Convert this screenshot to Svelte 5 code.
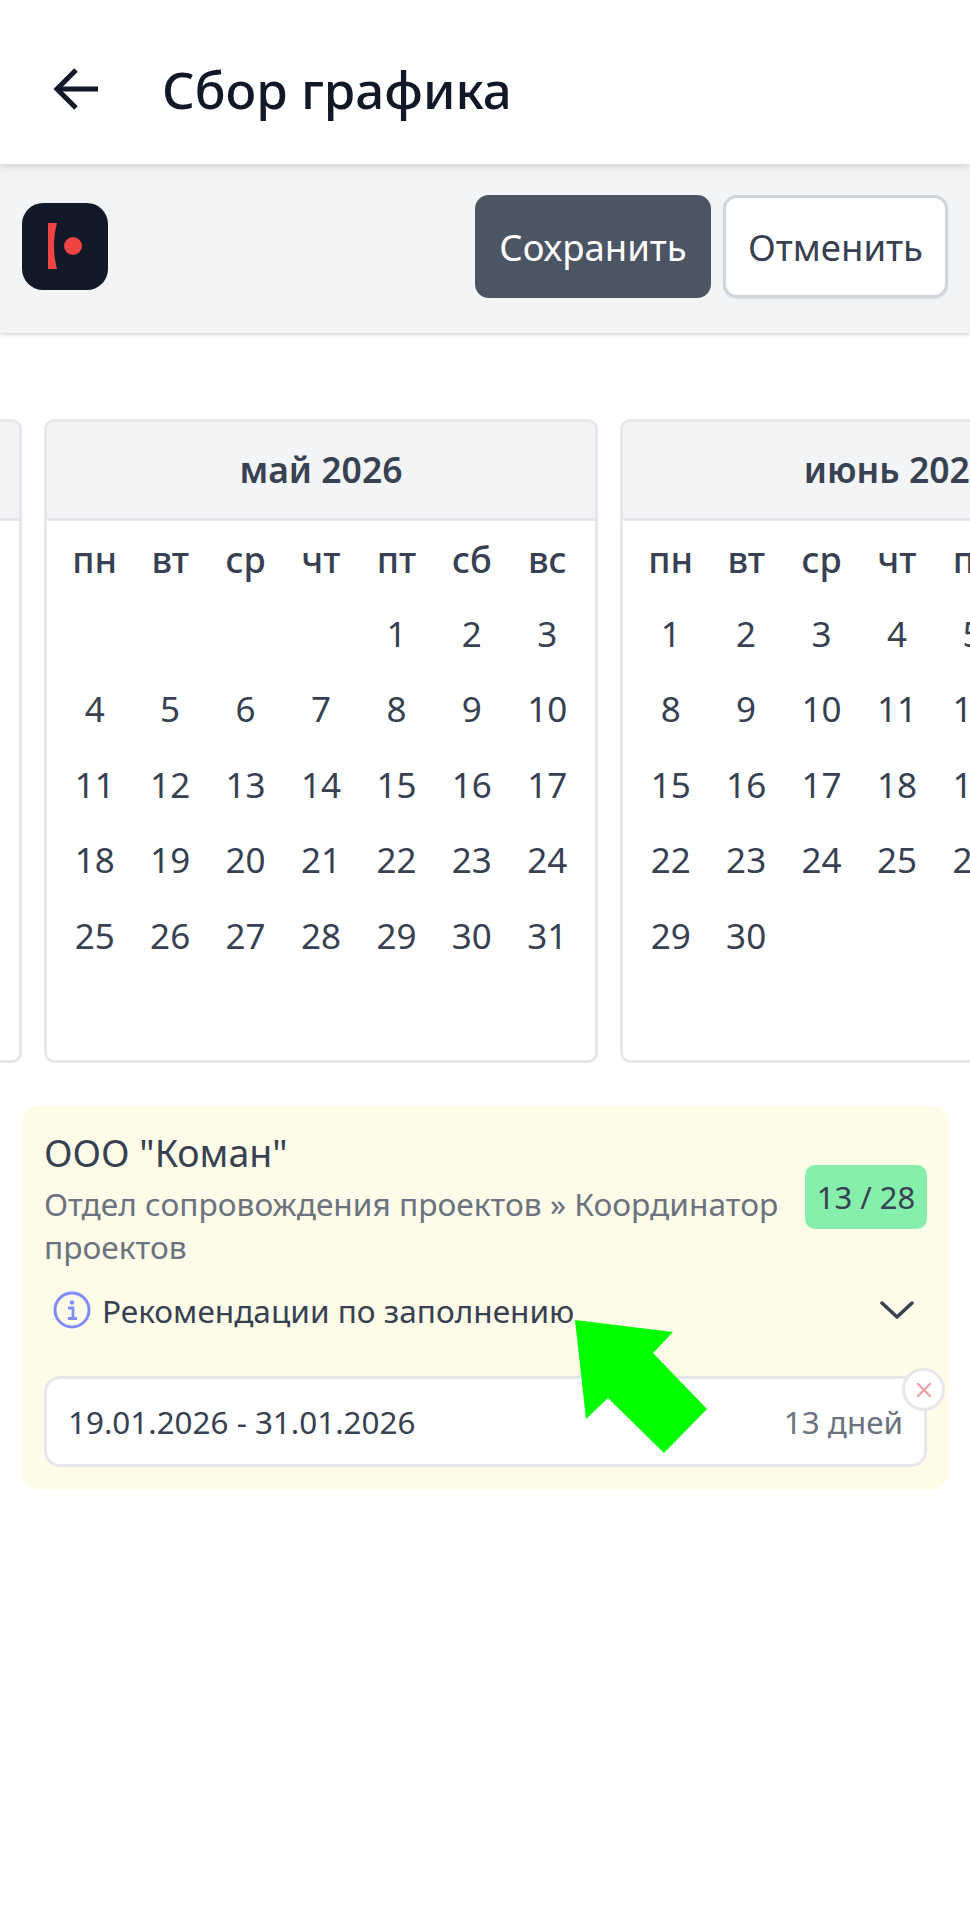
<script>
  const names = ['пн', 'вт', 'ср', 'чт', 'пт', 'сб', 'вс'];
  const months = [
    { title: 'май 2026', blank: 4, days: 31 },
    { title: 'июнь 2026', blank: 0, days: 30 }
  ];
  const list = (n) => Array.from({ length: n }, (_, i) => i + 1);
</script>

<div class="page">
  <header class="top">
    <button class="back" aria-label="Назад">
      <svg width="46" height="44" viewBox="0 0 46 44" fill="none" stroke="#111827" stroke-width="5" stroke-linecap="butt" stroke-linejoin="miter">
        <path d="M45 22H4" />
        <path d="M23 3 4 22l19 19" />
      </svg>
    </button>
    <h1>Сбор графика</h1>
  </header>

  <div class="toolbar">
    <div class="logo">
      <svg width="86" height="87" viewBox="0 0 86 87">
        <path d="M26 20h9c-4 15-4 31 0 46h-9z" fill="#ef4444" />
        <circle cx="51" cy="43" r="9" fill="#ef4444" />
      </svg>
    </div>
    <div class="actions">
      <button class="save">Сохранить</button>
      <button class="cancel">Отменить</button>
    </div>
  </div>

  <div class="scroller">
    <div class="track">
      <section class="month">
        <div class="month-title"></div>
      </section>
      {#each months as m}
        <section class="month">
          <div class="month-title">{m.title}</div>
          <div class="grid">
            {#each names as n}
              <div class="cell head">{n}</div>
            {/each}
            {#each list(m.blank) as b (b)}
              <div class="cell"></div>
            {/each}
            {#each list(m.days) as d (d)}
              <div class="cell">{d}</div>
            {/each}
          </div>
        </section>
      {/each}
    </div>
  </div>

  <section class="job">
    <div class="job-head">
      <div class="job-text">
        <div class="org">ООО "Коман"</div>
        <div class="dept">Отдел сопровождения проектов » Координатор проектов</div>
      </div>
      <div class="badge">13 / 28</div>
    </div>
    <div class="rec">
      <svg class="info" width="38" height="38" viewBox="0 0 38 38" fill="none">
        <circle cx="19" cy="19" r="17" stroke="#818cf8" stroke-width="3" />
        <circle cx="19" cy="11.5" r="2.2" fill="#818cf8" />
        <path d="M15 17h5v10M15 27.500h9" stroke="#818cf8" stroke-width="2.800" />
      </svg>
      <span class="rec-text">Рекомендации по заполнению</span>
      <svg class="chev" width="34" height="20" viewBox="0 0 34 20" fill="none" stroke="#374151" stroke-width="3.500" stroke-linecap="round" stroke-linejoin="round">
        <path d="M2 3l15 14L32 3" />
      </svg>
    </div>
    <div class="range">
      <span class="dates">19.01.2026 - 31.01.2026</span>
      <span class="count">13 дней</span>
      <button class="remove" aria-label="Удалить">
        <svg width="16" height="16" viewBox="0 0 16 16" stroke="#e8a3a8" stroke-width="2.400" stroke-linecap="round">
          <path d="M2 2l12 12M14 2 2 14" />
        </svg>
      </button>
    </div>
  </section>

  <svg class="pointer" width="140" height="140" viewBox="0 0 140 140">
    <polygon points="5,0 103,12 83,33 137,89 94,133 38,78 16,99" fill="#00ff00" />
  </svg>
</div>

<style>
  :global(body) {
    margin: 0;
    background: #fff;
  }

  .page {
    position: relative;
    width: 970px;
    height: 1930px;
    overflow: hidden;
    background: #fff;
    font-family: "Noto Sans", "Open Sans", sans-serif;
    color: #374151;
  }

  button {
    font: inherit;
    padding: 0;
    cursor: pointer;
  }

  .top {
    position: relative;
    z-index: 1;
    box-sizing: border-box;
    height: 164px;
    padding: 14px 0 0 53px;
    display: flex;
    align-items: center;
    gap: 63px;
    background: #fff;
    box-shadow: 0 2px 8px rgba(0, 0, 0, 0.16);
  }

  .back {
    display: flex;
    border: 0;
    background: none;
  }

  h1 {
    margin: 0;
    font-size: 51px;
    line-height: 60px;
    font-weight: 500;
    color: #111827;
  }

  .toolbar {
    box-sizing: border-box;
    height: 169px;
    padding: 31px 22px 35px 22px;
    display: flex;
    justify-content: space-between;
    align-items: center;
    background: #f3f4f6;
    box-shadow: 0 2px 3px rgba(0, 0, 0, 0.14);
  }

  .logo {
    display: flex;
    width: 86px;
    height: 87px;
    border-radius: 21px;
    background: #111827;
  }

  .actions {
    display: flex;
    gap: 12px;
  }

  .save,
  .cancel {
    box-sizing: border-box;
    height: 103px;
    border-radius: 14px;
    font-size: 36.500px;
  }

  .save {
    width: 236px;
    border: 0;
    background: #4b5563;
    color: #fff;
  }

  .cancel {
    width: 225px;
    border: 3px solid #d1d5db;
    background: #fff;
    color: #374151;
    box-shadow: 0 1px 2px rgba(0, 0, 0, 0.1);
  }

  .scroller {
    margin-top: 86px;
    overflow: hidden;
  }

  .track {
    display: flex;
    gap: 22px;
    width: max-content;
    margin-left: -532px;
  }

  .month {
    box-sizing: border-box;
    flex: none;
    width: 554px;
    height: 644px;
    border: 3px solid #e5e7eb;
    border-radius: 10px;
    overflow: hidden;
    background: #fff;
  }

  .month + .month {
    margin-left: 0;
  }

  .month-title {
    box-sizing: border-box;
    height: 99px;
    padding-bottom: 2px;
    display: flex;
    align-items: center;
    justify-content: center;
    background: #f3f4f6;
    border-bottom: 3px solid #e5e7eb;
    font-size: 35.500px;
    font-weight: 600;
    color: #374151;
  }

  .grid {
    display: grid;
    grid-template-columns: repeat(7, 1fr);
    grid-auto-rows: 75.4px;
    padding: 3px 10px 0;
  }

  .cell {
    box-sizing: border-box;
    padding-bottom: 7px;
    display: flex;
    align-items: center;
    justify-content: center;
    font-size: 35px;
    color: #374151;
  }

  .head {
    padding-bottom: 5px;
    font-weight: 500;
    font-size: 36px;
  }

  .job {
    box-sizing: border-box;
    height: 383px;
    margin: 43px 22px 0;
    padding: 24px 21px 0 22px;
    border-radius: 16px;
    background: #fefce8;
  }

  .job-head {
    display: flex;
    align-items: center;
    justify-content: space-between;
    gap: 23px;
  }

  .job-text {
    flex: 1;
    min-width: 0;
  }

  .org {
    font-size: 37.500px;
    line-height: 46px;
    color: #374151;
  }

  .dept {
    margin-top: 6px;
    font-size: 31.700px;
    line-height: 43px;
    color: #6b7280;
  }

  .badge {
    box-sizing: border-box;
    flex: none;
    width: 122px;
    height: 64px;
    margin-bottom: 4px;
    display: flex;
    align-items: center;
    justify-content: center;
    border-radius: 10px;
    background: #86efac;
    font-size: 31px;
    color: #374151;
  }

  .rec {
    display: flex;
    align-items: center;
    height: 44px;
    margin-top: 20px;
    padding-left: 9px;
  }

  .info {
    flex: none;
  }

  .rec-text {
    margin-left: 11px;
    font-size: 31.600px;
    color: #374151;
  }

  .chev {
    margin-left: auto;
    margin-right: 13px;
  }

  .range {
    position: relative;
    box-sizing: border-box;
    height: 91px;
    margin-top: 44px;
    padding: 0 21px 0 21px;
    display: flex;
    align-items: center;
    justify-content: space-between;
    background: #fff;
    border: 3px solid #e5e7eb;
    border-radius: 16px;
  }

  .dates {
    font-size: 31.400px;
    color: #374151;
  }

  .count {
    font-size: 31.400px;
    color: #6b7280;
  }

  .remove {
    position: absolute;
    top: -11px;
    right: -21px;
    box-sizing: border-box;
    width: 43px;
    height: 43px;
    display: flex;
    align-items: center;
    justify-content: center;
    border: 3px solid #e5e7eb;
    border-radius: 50%;
    background: #fff;
  }

  .pointer {
    position: absolute;
    left: 570px;
    top: 1320px;
  }
</style>
